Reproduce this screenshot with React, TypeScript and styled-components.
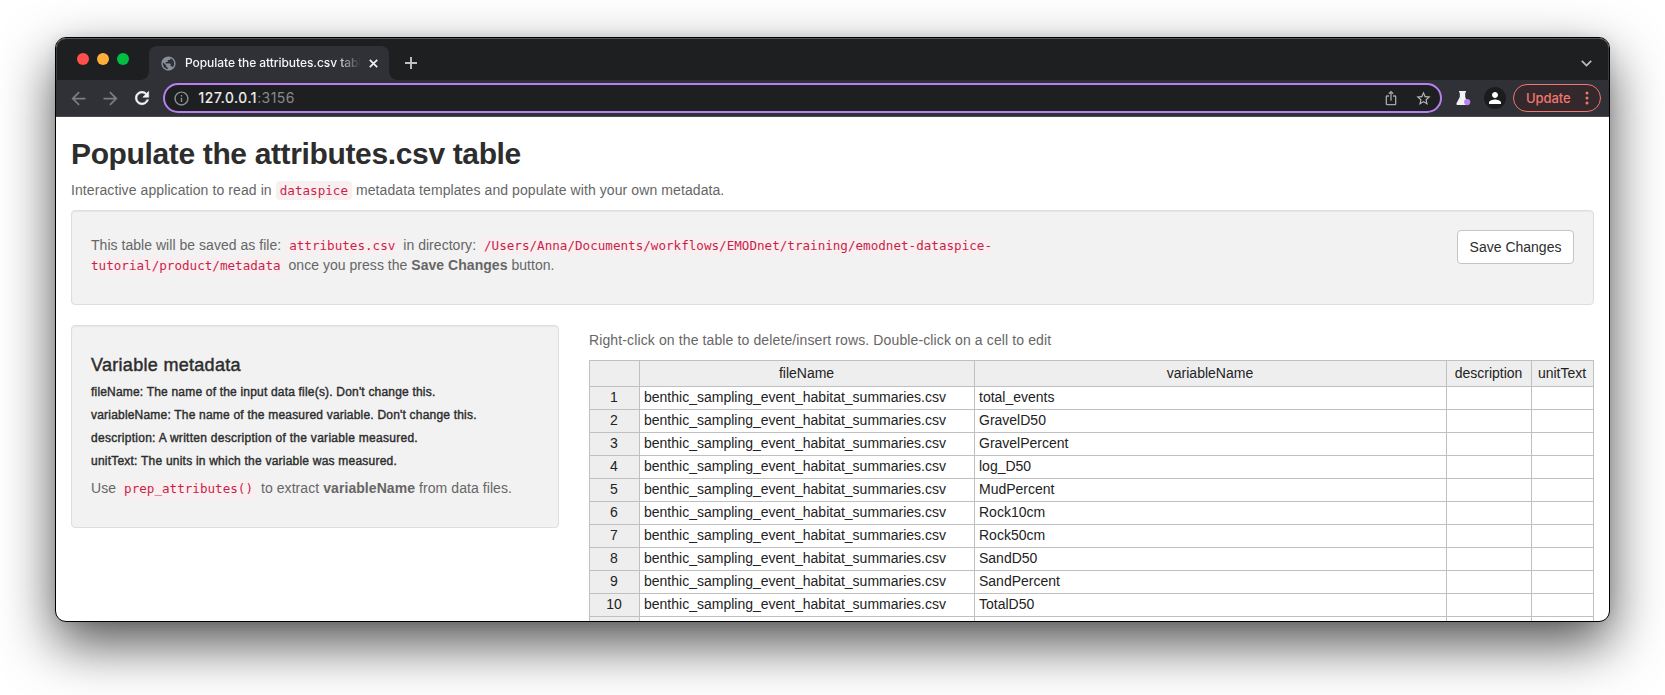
import React from 'react';
import styled, { createGlobalStyle } from 'styled-components';
import {
  MdArrowBack,
  MdArrowForward,
  MdInfoOutline,
  MdIosShare,
  MdPerson,
  MdPublic,
  MdRefresh,
  MdStarOutline,
} from 'react-icons/md';

const GlobalStyle = createGlobalStyle`
  * { box-sizing: border-box; }
  body {
    margin: 0;
    background: #fff;
    overflow: hidden;
    font-family: "Liberation Sans", Arial, sans-serif;
    font-size: 14px;
    line-height: 20px;
    color: #666;
  }
`;

const Desktop = styled.div`
  height: 695px;
  padding: 37px 55px 0;
`;

const BrowserWindow = styled.div`
  display: flex;
  flex-direction: column;
  height: 585px;
  overflow: hidden;
  border: 1px solid #000;
  border-radius: 11px;
  background: #fff;
  box-shadow: 0 22px 54px rgba(0, 0, 0, 0.68), 0 0 12px rgba(0, 0, 0, 0.08);
`;

/* Browser chrome */

const TabStrip = styled.div`
  display: flex;
  align-items: flex-end;
  flex: none;
  height: 42px;
  background: #1e1f21;
  border-radius: 10px 10px 0 0;
  box-shadow: inset 0 1px 0 #55565a, inset 1px 0 0 #3c3d40, inset -1px 0 0 #3c3d40;
`;

const TrafficLights = styled.div`
  display: flex;
  align-items: center;
  align-self: center;
  gap: 8px;
  width: 85px;
  padding-left: 21px;
`;

const Light = styled.span<{ $color: string }>`
  width: 12px;
  height: 12px;
  border-radius: 50%;
  background: ${(p) => p.$color};
`;

const TabFlare = styled.span<{ $side: 'left' | 'right' }>`
  width: 8px;
  height: 8px;
  background: radial-gradient(circle at top ${(p) => p.$side}, transparent 7.5px, #303136 8px);
`;

const Tab = styled.div`
  display: flex;
  align-items: center;
  width: 240px;
  height: 34px;
  padding-left: 11px;
  border-radius: 8px 8px 0 0;
  background: #303136;
  color: #86909a;
`;

const TabTitle = styled.span`
  width: 176px;
  margin-left: 8px;
  overflow: hidden;
  white-space: nowrap;
  font: 500 12px/18px Inter, sans-serif;
  letter-spacing: -0.06px;
  color: #f4f5f6;
  mask-image: linear-gradient(to right, #000 150px, transparent 176px);
`;

const StripIcon = styled.span<{ $width: number; $end?: boolean }>`
  display: flex;
  align-items: center;
  justify-content: center;
  width: ${(p) => p.$width}px;
  height: 34px;
  margin-left: ${(p) => (p.$end ? 'auto' : '0')};
  margin-right: ${(p) => (p.$end ? '6.5px' : '0')};
`;

const Toolbar = styled.div`
  display: flex;
  align-items: center;
  flex: none;
  height: 37px;
  padding: 0 8px 0 6px;
  border-bottom: 1px solid #4b4b4e;
  background: #303136;
`;

const ToolButton = styled.span<{ $color: string; $bold?: boolean }>`
  display: flex;
  align-items: center;
  justify-content: center;
  flex: none;
  width: 32px;
  height: 32px;
  color: ${(p) => p.$color};

  path:not([fill='none']) {
    stroke: ${(p) => (p.$bold ? 'currentColor' : 'none')};
    stroke-width: 0.7px;
  }
`;

const AddressBar = styled.div`
  display: flex;
  align-items: center;
  flex: 1;
  height: 30px;
  margin: 0 5px;
  padding: 0 1px 0 8px;
  border: 2px solid #b77ff0;
  border-radius: 15px;
  background: #1e1f21;
  color: #8b8f94;
`;

const Url = styled.span`
  flex: 1;
  margin-left: 8.5px;
  font: 400 14px/20px Inter, sans-serif;
  letter-spacing: 0.45px;
  color: #868a8f;
`;

const UrlHost = styled.span`
  letter-spacing: 0.6px;
  -webkit-text-stroke: 0.2px;
  color: #f2f3f4;
`;

const Avatar = styled.span`
  display: flex;
  align-items: center;
  justify-content: center;
  width: 22px;
  height: 22px;
  border-radius: 50%;
  background: #1b1c1e;
`;

const UpdateButton = styled.span`
  display: flex;
  align-items: center;
  flex: none;
  width: 88px;
  height: 28px;
  margin-left: 2px;
  padding-left: 12px;
  border: 1px solid #f2766d;
  border-radius: 14px;
  background: #33282c;
  font: 500 13px/20px Inter, sans-serif;
  letter-spacing: -0.1px;
  color: #f2766d;
`;

const MenuDots = styled.svg`
  margin-left: 15px;
`;

/* Page */

const Page = styled.main`
  flex: 1;
  min-height: 0;
  overflow: hidden;
  padding: 20px 15px 0;
`;

const Title = styled.h1`
  margin: 0 0 10px;
  font-size: 30px;
  font-weight: 700;
  line-height: 33px;
  letter-spacing: -0.36px;
  color: #2d2d2d;
`;

const Paragraph = styled.p<{ $tracking?: number }>`
  margin: 0 0 10px;
  letter-spacing: ${(p) => p.$tracking ?? 0}px;
`;

const Code = styled.code`
  padding: 2px 4px;
  border-radius: 4px;
  background: #f8eff1;
  font-family: "DejaVu Sans Mono", monospace;
  font-size: 12.6px;
  line-height: 1;
  letter-spacing: 0;
  color: #cb1f4a;
`;

const Well = styled.section`
  margin-bottom: 20px;
  padding: 19px;
  border: 1px solid #dedede;
  border-radius: 4px;
  background: #f2f2f2;
  box-shadow: inset 0 1px 1px rgba(0, 0, 0, 0.05);
`;

const SaveWell = styled(Well)`
  display: flex;
  align-items: flex-start;
  justify-content: space-between;
`;

const SaveNote = styled.div`
  width: 930px;
  padding-top: 5px;
`;

const SaveButton = styled.button`
  width: 117px;
  height: 34px;
  padding: 0;
  border: 1px solid #c4c4c4;
  border-radius: 4px;
  background: #fff;
  font: 14px/20px "Liberation Sans", Arial, sans-serif;
  color: #2d2d2d;
`;

const Columns = styled.div`
  display: flex;
  align-items: flex-start;
  justify-content: space-between;
`;

const Sidebar = styled(Well)`
  width: 488px;
`;

const SidebarTitle = styled.h4`
  margin: 11px 0 10px;
  font-size: 18px;
  font-weight: 400;
  line-height: 19.8px;
  letter-spacing: 0.3px;
  -webkit-text-stroke: 0.45px;
  color: #2d2d2d;
`;

const FieldNote = styled.h6<{ $tracking: number }>`
  margin: 10px 0;
  font-size: 12px;
  font-weight: 400;
  line-height: 13.2px;
  letter-spacing: ${(p) => p.$tracking}px;
  -webkit-text-stroke: 0.4px;
  color: #2d2d2d;

  &:last-of-type {
    margin-bottom: 9px;
  }
`;

const TablePane = styled.section`
  width: 1005px;
  padding-top: 5px;
`;

const Sheet = styled.div`
  border-top: 1px solid #c0c0c0;
  border-left: 1px solid #c0c0c0;
  color: #222;
`;

const SheetRow = styled.div<{ $header?: boolean }>`
  display: grid;
  grid-template-columns: 50px 335px 472px 85px 62px;
  height: ${(p) => (p.$header ? 26 : 23)}px;
  line-height: ${(p) => (p.$header ? 25 : 21)}px;
`;

const Cell = styled.div<{ $head?: boolean }>`
  padding: 0 ${(p) => (p.$head ? 5 : 4)}px 0 4px;
  border-right: 1px solid #c0c0c0;
  border-bottom: 1px solid #c0c0c0;
  background: ${(p) => (p.$head ? '#eee' : '#fff')};
  text-align: ${(p) => (p.$head ? 'center' : 'left')};
  white-space: nowrap;
`;

const fieldNotes = [
  { text: "fileName: The name of the input data file(s). Don't change this.", tracking: 0.19 },
  { text: "variableName: The name of the measured variable. Don't change this.", tracking: 0.2 },
  { text: 'description: A written description of the variable measured.', tracking: 0.28 },
  { text: 'unitText: The units in which the variable was measured.', tracking: 0.22 },
];

const headers = ['', 'fileName', 'variableName', 'description', 'unitText'];

const fileName = 'benthic_sampling_event_habitat_summaries.csv';

const variables = [
  'total_events',
  'GravelD50',
  'GravelPercent',
  'log_D50',
  'MudPercent',
  'Rock10cm',
  'Rock50cm',
  'SandD50',
  'SandPercent',
  'TotalD50',
];

const rows = [
  ...variables.map((name, i) => [String(i + 1), fileName, name, '', '']),
  ['', '', '', '', ''],
];

function BrowserChrome() {
  return (
    <>
      <TabStrip>
        <TrafficLights>
          <Light $color="#ff4f4c" />
          <Light $color="#ffae3b" />
          <Light $color="#00c043" />
        </TrafficLights>
        <TabFlare $side="left" />
        <Tab>
          <MdPublic size={17} />
          <TabTitle>Populate the attributes.csv table</TabTitle>
          <StripIcon $width={24}>
            <svg width="9" height="9" viewBox="0 0 9 9" stroke="#f1f2f3" strokeWidth="1.7">
              <path d="M0.8 0.8 8.2 8.2M8.2 0.8 0.8 8.2" />
            </svg>
          </StripIcon>
        </Tab>
        <TabFlare $side="right" />
        <StripIcon $width={28}>
          <svg width="12" height="12" viewBox="0 0 12 12" stroke="#bfc3c7" strokeWidth="1.9">
            <path d="M6 0V12M0 6H12" />
          </svg>
        </StripIcon>
        <StripIcon $width={32} $end>
          <svg width="11" height="7" viewBox="0 0 11 7" fill="none" stroke="#b9bcc0" strokeWidth="1.8">
            <path d="M0.8 0.9 5.5 5.6 10.2 0.9" />
          </svg>
        </StripIcon>
      </TabStrip>
      <Toolbar>
        <ToolButton $color="#7b7d81"><MdArrowBack size={21} /></ToolButton>
        <ToolButton $color="#7b7d81"><MdArrowForward size={21} /></ToolButton>
        <ToolButton $color="#f3f4f5" $bold><MdRefresh size={20} /></ToolButton>
        <AddressBar>
          <MdInfoOutline size={17} />
          <Url>
            <UrlHost>127.0.0.1</UrlHost>:3156
          </Url>
          <ToolButton $color="#a3a6aa"><MdIosShare size={16} /></ToolButton>
          <ToolButton $color="#b4b6ba"><MdStarOutline size={17} /></ToolButton>
        </AddressBar>
        <ToolButton $color="#f1f2f3">
          <svg width="16" height="16" viewBox="0 0 16 16">
            <path d="M4 1H11V2.4H10.2V7L13 13.2Q13.6 15 12 15H2.4Q.8 15 1.5 13.2L4.8 7V2.4H4Z" fill="currentColor" />
            <circle cx="12.2" cy="12.1" r="3.1" fill="#bb80f2" />
          </svg>
        </ToolButton>
        <ToolButton $color="#fff">
          <Avatar><MdPerson size={18} /></Avatar>
        </ToolButton>
        <UpdateButton>
          Update
          <MenuDots width="4" height="14" viewBox="0 0 4 14" fill="currentColor">
            <circle cx="2" cy="2" r="1.5" />
            <circle cx="2" cy="7" r="1.5" />
            <circle cx="2" cy="12" r="1.5" />
          </MenuDots>
        </UpdateButton>
      </Toolbar>
    </>
  );
}

function AttributesTable() {
  return (
    <Sheet>
      <SheetRow $header>
        {headers.map((label) => (
          <Cell key={label} $head>{label}</Cell>
        ))}
      </SheetRow>
      {rows.map((cells, r) => (
        <SheetRow key={r}>
          {cells.map((value, c) => (
            <Cell key={c} $head={c === 0}>{value}</Cell>
          ))}
        </SheetRow>
      ))}
    </Sheet>
  );
}

export default function App() {
  return (
    <Desktop>
      <GlobalStyle />
      <BrowserWindow>
        <BrowserChrome />
        <Page>
          <Title>Populate the attributes.csv table</Title>
          <Paragraph $tracking={0.09}>
            Interactive application to read in <Code>dataspice</Code> metadata templates and
            populate with your own metadata.
          </Paragraph>
          <SaveWell>
            <SaveNote>
              <Paragraph $tracking={0.035}>
                This table will be saved as file: <Code>attributes.csv</Code> in directory:{' '}
                <Code>
                  /Users/Anna/Documents/workflows/EMODnet/training/emodnet-dataspice-tutorial/product/metadata
                </Code>{' '}
                once you press the <b>Save Changes</b> button.
              </Paragraph>
            </SaveNote>
            <SaveButton>Save Changes</SaveButton>
          </SaveWell>
          <Columns>
            <Sidebar>
              <SidebarTitle>Variable metadata</SidebarTitle>
              {fieldNotes.map(({ text, tracking }) => (
                <FieldNote key={text} $tracking={tracking}>{text}</FieldNote>
              ))}
              <Paragraph $tracking={0.07}>
                Use <Code>prep_attributes()</Code> to extract <b>variableName</b> from data files.
              </Paragraph>
            </Sidebar>
            <TablePane>
              <Paragraph $tracking={0.12}>
                Right-click on the table to delete/insert rows. Double-click on a cell to edit
              </Paragraph>
              <AttributesTable />
            </TablePane>
          </Columns>
        </Page>
      </BrowserWindow>
    </Desktop>
  );
}
